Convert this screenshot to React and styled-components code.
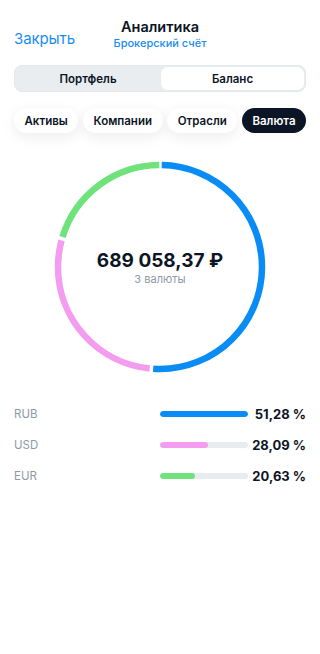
import styled, { createGlobalStyle } from "styled-components";

const GlobalStyle = createGlobalStyle`
    html, body {
        margin: 0;
        padding: 0;
        background: #ffffff;
    }
    body {
        font-family: Inter, "Noto Sans", "Liberation Sans", sans-serif;
        color: #0c1525;
        -webkit-font-smoothing: antialiased;
    }
`;

const tabs = ["Портфель", "Баланс"];
const chips = ["Активы", "Компании", "Отрасли", "Валюта"];

const currencies = [
    { code: "RUB", share: 51.28, label: "51,28 %", color: "#0a8cf6" },
    { code: "USD", share: 28.09, label: "28,09 %", color: "#f49cef" },
    { code: "EUR", share: 20.63, label: "20,63 %", color: "#6fe27b" },
];

const RADIUS = 102;
const CIRC = 2 * Math.PI * RADIUS;
const GAP = 3.5;

const Donut = () => {
    let offset = 0;
    return (
        <svg width="214" height="214" viewBox="0 0 214 214">
            <g transform="rotate(-90 107 107)">
                {currencies.map((c) => {
                    const len = (c.share / 100) * CIRC;
                    const seg = (
                        <circle
                            key={c.code}
                            cx="107"
                            cy="107"
                            r={RADIUS}
                            fill="none"
                            stroke={c.color}
                            strokeWidth="6.5"
                            strokeDasharray={`${len - GAP} ${CIRC}`}
                            strokeDashoffset={-(offset + GAP / 2)}
                        />
                    );
                    offset += len;
                    return seg;
                })}
            </g>
        </svg>
    );
};

const App = () => {
    return (
        <>
            <GlobalStyle />
            <Page>
                <Header>
                    <CloseLink>Закрыть</CloseLink>
                    <TitleBlock>
                        <Title>Аналитика</Title>
                        <Subtitle>Брокерский счёт</Subtitle>
                    </TitleBlock>
                    <span />
                </Header>

                <Segmented>
                    {tabs.map((t, i) => (
                        <SegmentButton key={t} active={i === 1}>
                            {t}
                        </SegmentButton>
                    ))}
                </Segmented>

                <ChipRow>
                    {chips.map((c, i) => (
                        <Chip key={c} active={i === 3}>
                            {c}
                        </Chip>
                    ))}
                </ChipRow>

                <ChartWrap>
                    <Donut />
                    <ChartCenter>
                        <Total>689 058,37 ₽</Total>
                        <TotalCaption>3 валюты</TotalCaption>
                    </ChartCenter>
                </ChartWrap>

                <Legend>
                    {currencies.map((c) => (
                        <LegendRow key={c.code}>
                            <Code>{c.code}</Code>
                            <Track>
                                <Fill
                                    color={c.color}
                                    style={{ width: `${(c.share / 51.28) * 100}%` }}
                                />
                            </Track>
                            <Percent>{c.label}</Percent>
                        </LegendRow>
                    ))}
                </Legend>
            </Page>
        </>
    );
};

const Page = styled.div`
    width: 320px;
    min-height: 654px;
    box-sizing: border-box;
    padding: 0 14px;
`;

const Header = styled.div`
    display: grid;
    grid-template-columns: 1fr auto 1fr;
    padding-top: 18px;
`;

const CloseLink = styled.a`
    padding-top: 12px;
    font-size: 15px;
    line-height: 18px;
    color: #1a8df2;
    letter-spacing: -0.1px;
`;

const TitleBlock = styled.div`
    display: flex;
    flex-direction: column;
    align-items: center;
`;

const Title = styled.h1`
    margin: 0;
    font-size: 14.5px;
    line-height: 18px;
    font-weight: 600;
    color: #0c1525;
`;

const Subtitle = styled.span`
    font-size: 11px;
    line-height: 14px;
    font-weight: 500;
    color: #1a8df2;
`;

const Segmented = styled.div`
    display: grid;
    grid-template-columns: 1fr 1fr;
    margin-top: 15px;
    height: 27px;
    box-sizing: border-box;
    padding: 1px;
    border: 1px solid #e3e8ec;
    border-radius: 8px;
    background: #e9edf0;
`;

const SegmentButton = styled.div`
    display: flex;
    align-items: center;
    justify-content: center;
    margin-left: ${(props) => (props.active ? "1px" : "0")};
    border-radius: 7px;
    background: ${(props) => (props.active ? "#ffffff" : "transparent")};
    font-size: 11.5px;
    font-weight: 600;
    color: #0c1525;
`;

const ChipRow = styled.div`
    display: flex;
    justify-content: space-between;
    margin-top: 16px;
`;

const Chip = styled.div`
    display: flex;
    align-items: center;
    height: 25px;
    padding: 0 10.5px;
    border-radius: 13px;
    background: ${(props) => (props.active ? "#0c1525" : "#ffffff")};
    color: ${(props) => (props.active ? "#ffffff" : "#0c1525")};
    box-shadow: ${(props) =>
        props.active ? "none" : "0 4px 14px rgba(20, 30, 50, 0.08)"};
    font-size: 11.5px;
    font-weight: 600;
`;

const ChartWrap = styled.div`
    position: relative;
    display: flex;
    justify-content: center;
    margin-top: 27px;
`;

const ChartCenter = styled.div`
    position: absolute;
    inset: 0;
    display: flex;
    flex-direction: column;
    align-items: center;
    justify-content: center;
`;

const Total = styled.div`
    margin-top: 2px;
    font-size: 19px;
    line-height: 22px;
    font-weight: 700;
    color: #0c1525;
`;

const TotalCaption = styled.div`
    font-size: 11px;
    line-height: 14px;
    color: #8e99a5;
`;

const Legend = styled.div`
    display: flex;
    flex-direction: column;
    margin-top: 24px;
`;

const LegendRow = styled.div`
    display: grid;
    grid-template-columns: 1fr 88px 58px;
    align-items: center;
    height: 31px;
`;

const Code = styled.span`
    font-size: 11.5px;
    color: #8e99a5;
`;

const Track = styled.div`
    height: 6px;
    border-radius: 3px;
    background: #e8ecef;
    overflow: hidden;
`;

const Fill = styled.div`
    height: 100%;
    border-radius: 3px;
    background: ${(props) => props.color};
`;

const Percent = styled.span`
    text-align: right;
    font-size: 13px;
    font-weight: 700;
    color: #0c1525;
`;

export default App;
